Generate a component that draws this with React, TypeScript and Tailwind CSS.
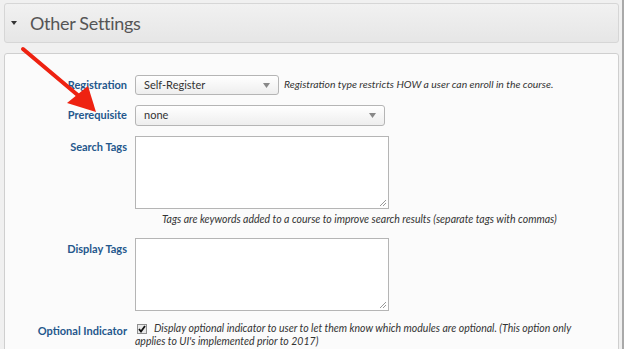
import React from "react";

const font = { fontFamily: "Lato, 'Open Sans', sans-serif" };

function Select({ value, width }: { value: string; width: string }) {
  return (
    <div
      className={`${width} h-[20px] flex items-center justify-between pl-[8px] pr-[8px] border border-[#b5b5b5] rounded-[3px] bg-gradient-to-b from-[#ffffff] to-[#eeeeee] text-[11px] text-[#333]`}
    >
      <span>{value}</span>
      <svg width="7" height="5" viewBox="0 0 7 5">
        <path d="M0 0 L7 0 L3.5 5 Z" fill="#888" />
      </svg>
    </div>
  );
}

function Area() {
  return (
    <div className="relative w-[254px] h-[73px] border border-[#b5b5b5] bg-white">
      <svg className="absolute right-[1px] bottom-[1px]" width="8" height="8" viewBox="0 0 8 8">
        <path d="M7 1 L1 7 M7 4 L4 7" stroke="#999" strokeWidth="1" />
      </svg>
    </div>
  );
}

export default function App() {
  return (
    <div
      className="relative w-[624px] h-[349px] overflow-hidden bg-[#f0f0f0] border-r-2 border-[#a9a9a9]"
      style={font}
    >
      <div className="pl-[4px] pr-[3px] pt-[3px]">
        <div className="h-[40px] flex items-center border border-[#d6d6d6] rounded-[3px] bg-gradient-to-b from-[#f1f1f1] to-[#e6e6e6]">
          <svg className="ml-[6px]" width="6" height="4" viewBox="0 0 6 4">
            <path d="M0 0 L6 0 L3 4 Z" fill="#333" />
          </svg>
          <span className="ml-[13px] text-[18px] tracking-[-0.3px] text-[#555] leading-none">Other Settings</span>
        </div>
        <div className="mt-[10px] h-[320px] border border-[#cfcfcf] rounded-t-[3px] bg-[#fbfbfb] pt-[21px]">
          <div className="grid grid-cols-[122px_1fr] gap-x-[8px] text-[11px]">
            <div className="h-[20px] flex items-center justify-end font-bold text-[#24578c]">Registration</div>
            <div className="flex items-center gap-[5px]">
              <Select value="Self-Register" width="w-[144px]" />
              <span className="italic text-[10.4px] text-[#333]">
                Registration type restricts HOW a user can enroll in the course.
              </span>
            </div>

            <div className="mt-[10px] h-[21px] flex items-center justify-end font-bold text-[#24578c]">Prerequisite</div>
            <div className="mt-[10px]">
              <Select value="none" width="w-[250px] h-[21px]" />
            </div>

            <div className="mt-[10px] pt-[3px] flex justify-end font-bold text-[#24578c]">Search Tags</div>
            <div className="mt-[10px]">
              <Area />
              <div className="mt-[3px] pl-[27px] italic text-[10.5px] text-[#333] leading-[14px] whitespace-nowrap">
                Tags are keywords added to a course to improve search results (separate tags with commas)
              </div>
            </div>

            <div className="mt-[12px] pt-[3px] flex justify-end font-bold text-[#24578c]">Display Tags</div>
            <div className="mt-[12px]">
              <Area />
            </div>

            <div className="mt-[11px] pt-[1px] flex justify-end font-bold text-[#24578c]">Optional Indicator</div>
            <div className="mt-[11px] w-[442px] italic text-[10.5px] text-[#333] leading-[13px]">
              <span className="inline-flex align-[-1px] ml-[2px] mr-[7px] w-[10px] h-[10px] border border-[#8f8f8f] bg-[#e9e9e9] items-center justify-center">
                <svg width="8" height="8" viewBox="0 0 8 8">
                  <path d="M1 4 L3 6.5 L7 1" stroke="#111" strokeWidth="1.8" fill="none" />
                </svg>
              </span>
              Display optional indicator to user to let them know which modules are optional. (This option only applies to UI's implemented prior to 2017)
            </div>
          </div>
        </div>
      </div>
      <svg className="absolute left-0 top-0 pointer-events-none" width="624" height="349">
        <line x1="23" y1="49" x2="80" y2="97" stroke="#ee2211" strokeWidth="4" strokeLinecap="round" />
        <polygon points="67,103 88,86 96,112" fill="#ee2211" />
      </svg>
    </div>
  );
}
